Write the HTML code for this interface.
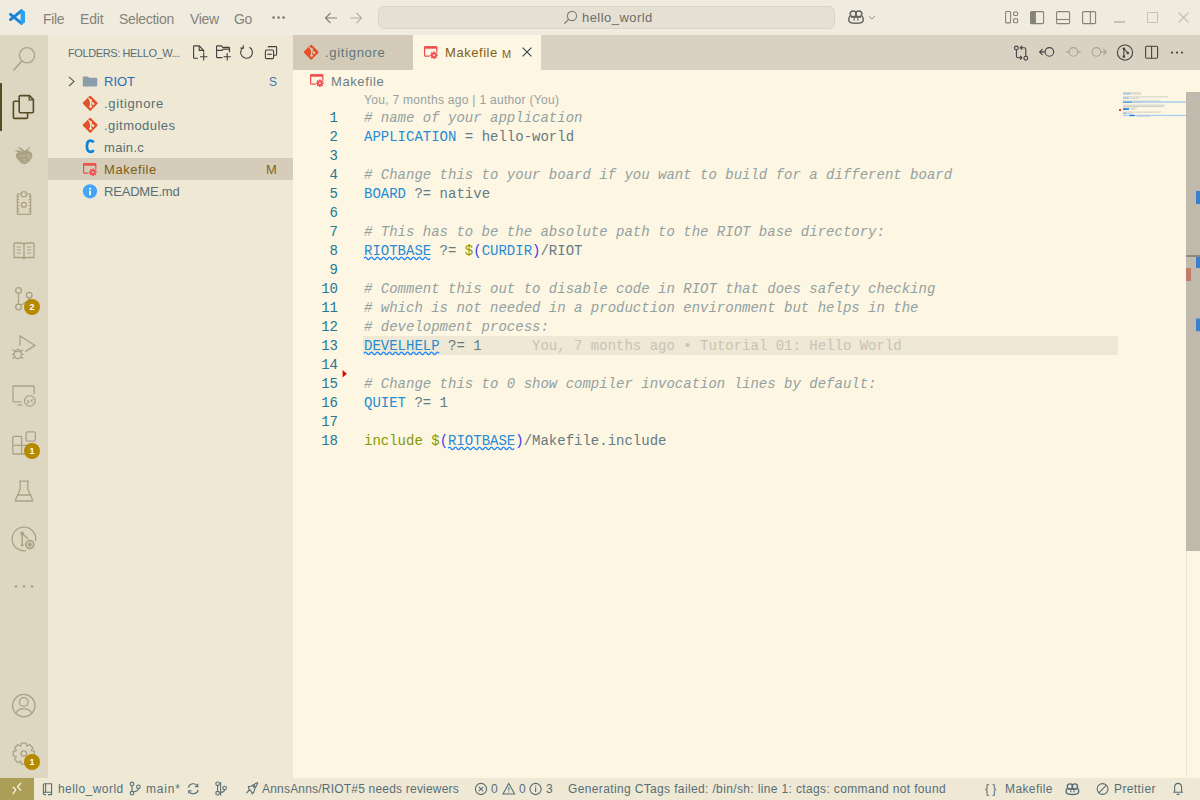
<!DOCTYPE html>
<html><head><meta charset="utf-8">
<style>
*{box-sizing:border-box;margin:0;padding:0}
html,body{width:1200px;height:800px;overflow:hidden;background:#FDF6E3;font-family:"Liberation Sans",sans-serif;font-size:13px;color:#586E75}
.abs{position:absolute}
#title{left:0;top:0;width:1200px;height:35px;background:#F0EBDF}
#act{left:0;top:35px;width:48px;height:743px;background:#DDD6C1}
#side{left:48px;top:35px;width:245px;height:743px;background:#EEE8D5}
#tabs{left:293px;top:35px;width:907px;height:35px;background:#D9D2C2}
#status{left:0;top:778px;width:1200px;height:22px;background:#EEE8D5}
.t{position:absolute;white-space:pre;line-height:1}
.menu{color:#85827a;font-size:14px;top:11.5px}
.code{font-family:"Liberation Mono",monospace;font-size:14px;white-space:pre}
.ln{position:absolute;left:293px;width:45px;text-align:right;color:#237893;font-family:"Liberation Mono",monospace;font-size:14px;height:19px;line-height:19px;padding-top:1px}
.cl{position:absolute;left:364px;height:19px;line-height:19px;color:#657B83;padding-top:1px}
.cm{color:#93A1A1;font-style:italic}
.vr{color:#268BD2}
.kw{color:#859900}
.br{color:#3b3bf0}
svg{position:absolute;overflow:visible}
.ai{fill:none;stroke:#ACA185;stroke-width:1.3}
.badge{position:absolute;width:16px;height:16px;border-radius:8px;background:#B58900;color:#fff;font-size:9px;font-weight:bold;text-align:center;line-height:16px}
.row{position:absolute;left:48px;width:245px;height:22px}
.fn{position:absolute;left:104px;font-size:13px;color:#586E75;white-space:pre;line-height:1}
.sb{position:absolute;top:783px;font-size:12px;color:#586E75;white-space:pre;line-height:1}
.si{fill:none;stroke:#586E75;stroke-width:1.1}
.ti{fill:none;stroke:#424242;stroke-width:1.1}
</style></head><body>
<div id="title" class="abs"></div>
<div id="act" class="abs"></div>
<div id="side" class="abs"></div>
<div id="tabs" class="abs"></div>
<div id="status" class="abs"></div>
<!-- TITLE BAR -->
<svg style="left:9px;top:9px" width="16" height="16" viewBox="0 0 16 16"><path d="M1.5 10.6 L12.6 1.6 M1.5 5.4 L12.6 14.4" stroke="#1B84D4" stroke-width="2.9" stroke-linecap="round" fill="none"/><path d="M11.6 0.3 L15.2 1.9 Q16 2.3 16 3.1 V12.9 Q16 13.7 15.2 14.1 L11.6 15.7 Z" fill="#27A2EE"/></svg>
<div class="t menu" style="left:43px;letter-spacing:-0.3px">File</div>
<div class="t menu" style="left:80px;letter-spacing:-0.2px">Edit</div>
<div class="t menu" style="left:119px;letter-spacing:-0.3px">Selection</div>
<div class="t menu" style="left:190px;letter-spacing:-0.3px">View</div>
<div class="t menu" style="left:234px;letter-spacing:-0.5px">Go</div>
<svg style="left:272px;top:16px" width="14" height="3"><circle cx="1.6" cy="1.6" r="1.3" fill="#7d7a72"/><circle cx="6.6" cy="1.6" r="1.3" fill="#7d7a72"/><circle cx="11.6" cy="1.6" r="1.3" fill="#7d7a72"/></svg>
<svg style="left:324px;top:11px" width="14" height="14" viewBox="0 0 14 14"><path d="M13 7 H1.5 M6.5 2 L1.5 7 L6.5 12" fill="none" stroke="#85827a" stroke-width="1.2"/></svg>
<svg style="left:349px;top:11px" width="14" height="14" viewBox="0 0 14 14"><path d="M1 7 H12.5 M7.5 2 L12.5 7 L7.5 12" fill="none" stroke="#B3AFA6" stroke-width="1.2"/></svg>
<div class="abs" style="left:378px;top:6px;width:457px;height:23px;border-radius:6px;background:#E5E0D4;border:1px solid #D9D4C8"></div>
<svg style="left:563px;top:10px" width="15" height="15" viewBox="0 0 15 15"><circle cx="9" cy="6" r="4.6" fill="none" stroke="#85827a" stroke-width="1.2"/><path d="M5.7 9.3 L1.3 13.7" stroke="#85827a" stroke-width="1.3"/></svg>
<div class="t" style="left:582px;top:11px;font-size:13px;color:#6f6c66;letter-spacing:0.45px">hello_world</div>
<svg style="left:848px;top:10px" width="16" height="14" viewBox="0 0 16 14"><g fill="none" stroke="#666460" stroke-width="1.5"><ellipse cx="5.2" cy="3.9" rx="3" ry="2.9"/><ellipse cx="10.8" cy="3.9" rx="3" ry="2.9"/><path d="M2.3 6.2 C1.3 6.6 0.9 7.4 0.9 8.6 V10.4 C0.9 12.6 4.6 13.2 8 13.2 C11.4 13.2 15.1 12.6 15.1 10.4 V8.6 C15.1 7.4 14.7 6.6 13.7 6.2"/><path d="M3.4 7.3 H12.6" stroke-width="1.2"/></g><path d="M6.2 8.6 V10.6 M9.8 8.6 V10.6" stroke="#666460" stroke-width="1.4"/></svg>
<svg style="left:868px;top:15px" width="8" height="5" viewBox="0 0 8 5"><path d="M0.8 1 L3.9 4 L7 1" fill="none" stroke="#8b8880" stroke-width="0.9"/></svg>
<svg style="left:1004px;top:10px" width="16" height="14" viewBox="0 0 16 14"><rect x="1.6" y="1.5" width="5" height="11.4" rx="1" fill="none" stroke="#85827a" stroke-width="1.1"/><rect x="9.6" y="2" width="4" height="3.5" rx="0.9" fill="none" stroke="#85827a" stroke-width="1.1"/><rect x="9.6" y="8.8" width="4" height="4" rx="0.9" fill="none" stroke="#85827a" stroke-width="1.1"/></svg>
<svg style="left:1029px;top:10px" width="16" height="15" viewBox="0 0 16 15"><rect x="1.6" y="1.6" width="13" height="12" rx="1.2" fill="none" stroke="#85827a" stroke-width="1.1"/><rect x="1.6" y="1.6" width="5.3" height="12" fill="#85827a"/></svg>
<svg style="left:1055px;top:10px" width="16" height="15" viewBox="0 0 16 15"><rect x="1.6" y="1.6" width="13" height="12" rx="1.2" fill="none" stroke="#85827a" stroke-width="1.1"/><path d="M1.6 9.5 H14.6" stroke="#85827a" stroke-width="1.1"/></svg>
<svg style="left:1081px;top:10px" width="16" height="15" viewBox="0 0 16 15"><rect x="1.6" y="1.6" width="13" height="12" rx="1.2" fill="none" stroke="#85827a" stroke-width="1.1"/><path d="M9.4 1.6 V13.6" stroke="#85827a" stroke-width="1.1"/></svg>
<div class="abs" style="left:1114px;top:21px;width:11px;height:1.6px;background:#C6C2B9"></div>
<div class="abs" style="left:1146.5px;top:12px;width:11px;height:11px;border:1.3px solid #C6C2B9"></div>
<svg style="left:1178px;top:12px" width="11" height="11" viewBox="0 0 11 11"><path d="M0.5 0.5 L10.5 10.5 M10.5 0.5 L0.5 10.5" stroke="#C6C2B9" stroke-width="1.3"/></svg>
<!-- ACTIVITY BAR -->
<div class="abs" style="left:0;top:83px;width:2px;height:48px;background:#584C27"></div>
<svg style="left:0;top:0" width="48" height="800">
<g class="ai">
<circle cx="27" cy="55.3" r="7.6"/><path d="M21.6 61.2 L13.6 70.2" stroke-width="1.5"/>
</g>
<g fill="none" stroke="#584C27" stroke-width="1.6">
<path d="M19.3 101.2 H14.6 Q13.4 101.2 13.4 102.4 V117.2 Q13.4 118.4 14.6 118.4 H26.4 Q27.6 118.4 27.6 117.2 V112.8"/>
<path d="M20.4 95.6 H29.4 L33.4 99.6 V111.6 Q33.4 112.8 32.2 112.8 H20.4 Q19.2 112.8 19.2 111.6 V96.8 Q19.2 95.6 20.4 95.6 Z"/>
<path d="M29.2 95.8 V99.8 H33.2" stroke-width="1.3"/>
</g>
<g fill="#ACA185">
<path d="M16 154.2 C16.6 152.3 19.2 151.6 22.2 152 C25.2 150.6 29.2 150.4 31.2 152.4 C33.2 154.6 32.4 157.6 30.2 160.2 C28.2 162.6 25.6 164.6 23.6 164.1 C21 163.5 16.6 158.8 16 156.4 Z"/>
<path d="M13.8 150.6 Q19 149.2 23.4 152.4 L21.6 153.8 Q18 151.8 13.8 150.6 Z"/>
<path d="M17.4 147.2 Q22.8 147.4 24.6 152 L22.2 152.6 Q21.4 149.4 17.4 147.2 Z"/>
<path d="M29.8 146 Q29.8 151 24.2 152.8 L23 151 Q28 149.8 29.8 146 Z"/>
</g>
<g fill="none" stroke="#CFC7B0" stroke-width="0.7" opacity="0.9">
<path d="M19 156.5 Q21 155.6 22.6 156.2 Q24 155 25.4 155.8"/>
<path d="M27.4 153.6 Q28.6 155.6 27.6 158 M29.6 154.4 Q30.6 156.4 29.4 158.6"/>
<path d="M22.6 159.6 Q24.4 158.6 26 159.6 M23.4 161.8 Q25 161 26.4 161.8"/>
</g>
<g class="ai">
<path d="M21.2 193.8 H18.4 Q17.4 193.8 17.4 194.8 V213.4 Q17.4 214.4 18.4 214.4 H29.6 Q30.6 214.4 30.6 213.4 V194.8 Q30.6 193.8 29.6 193.8 H26.6"/>
<circle cx="23.9" cy="194.2" r="2.6"/><circle cx="23.9" cy="204.8" r="2.5"/>
<path d="M17.4 196.4 H19.2 M17.4 199.4 H19.2 M17.4 202.4 H19.2 M17.4 205.6 H19.2 M17.4 208.6 H19.2 M17.4 211.6 H19.2 M30.6 196.4 H28.8 M30.6 199.4 H28.8 M30.6 202.4 H28.8 M30.6 205.6 H28.8 M30.6 208.6 H28.8 M30.6 211.6 H28.8"/>
</g>
<g class="ai" stroke-width="1.4">
<path d="M14 243 H21.5 Q24 243 24 245 V259 M34 243 H26.5 Q24 243 24 245 M14 243 V257.5 H22 Q24 257.5 24 259.5 Q24 257.5 26 257.5 H34 V243"/>
<path d="M16.8 247 H21 M16.8 250 H21 M16.8 253 H21 M27 247 H31.2 M27 250 H31.2 M27 253 H31.2" stroke-width="1.2"/>
</g>
<g class="ai" stroke-width="1.3">
<circle cx="18.5" cy="290.5" r="2.8"/><circle cx="29.2" cy="295.2" r="2.8"/><circle cx="18.5" cy="307" r="2.8"/>
<path d="M18.5 293.3 V304.2 M29.2 298 C29.2 302 25 303 21 305"/>
</g>
<g class="ai" stroke-width="1.4">
<path d="M20 345.8 V335.9 L35 345.4 L25.4 351.6"/>
<ellipse cx="17.8" cy="354.1" rx="3.6" ry="4.6"/>
<path d="M14.4 351.7 H21.2 M12 354.3 H14.2 M21.4 354.3 H23.6 M12.4 349.6 L14.6 351.2 M23.2 349.6 L21 351.2 M12.4 358.8 L14.6 356.8 M23.2 358.8 L21 356.8" stroke-width="1.2"/>
</g>
<g class="ai" stroke-width="1.3">
<path d="M21.6 401.8 H13.6 Q13 401.8 13 401.2 V386.6 Q13 386 13.6 386 H33.6 Q34.2 386 34.2 386.6 V394.2"/>
<path d="M17.3 405 H22.5"/>
<circle cx="29.8" cy="400.9" r="5.3"/>
<path d="M27.1 399.9 L28.8 401.7 L27.1 403.5 M32.7 399.2 L31 400.8 L32.7 402.4" stroke-width="1.1"/>
</g>
<g class="ai" stroke-width="1.3">
<path d="M12.8 445.4 H30 M21.6 454 H13.8 Q12.8 454 12.8 453 V437.4 Q12.8 436.4 13.8 436.4 H20.6 Q21.6 436.4 21.6 437.4 V454 H30 V445.4"/>
<rect x="26.1" y="431.8" width="9.3" height="9.3" rx="1.3"/>
</g>
<g class="ai" stroke-width="1.4">
<path d="M19 481.2 H29 M20.2 481.2 V489 L15.4 500.2 Q15.2 501 16 501 H32.2 Q33 501 32.8 500.2 L27.8 489 V481.2 M17.6 495 H30.4"/>
</g>
<g class="ai" stroke-width="1.3">
<path d="M35.6 541 A11.8 11.8 0 1 0 26.05 550.6"/>
<path d="M22.2 533.6 V545 M22.4 533.8 L28 538.8" stroke-width="1.5"/>
<circle cx="29.8" cy="544.6" r="3.9" stroke-width="1.8"/>
</g>
<g fill="#ACA185"><circle cx="22.2" cy="533.5" r="1.9"/><circle cx="22.2" cy="545" r="1.4"/><circle cx="29.8" cy="544.6" r="2.1"/></g>
<g fill="#ACA185"><circle cx="16" cy="586.5" r="1.3"/><circle cx="24" cy="586.5" r="1.3"/><circle cx="32" cy="586.5" r="1.3"/></g>
<g class="ai" stroke-width="1.4">
<circle cx="23.8" cy="705.6" r="11.2"/>
<circle cx="23.8" cy="702" r="4.3"/>
<path d="M15.6 713.6 C17.4 709.8 20.4 708.6 23.8 708.6 C27.2 708.6 30.2 709.8 32 713.6"/>
</g>
<g class="ai" stroke-width="1.3">
<path d="M20.76 746.20 L21.44 743.06 L26.16 743.06 L26.84 746.20 L26.88 746.22 L29.59 744.48 L32.92 747.81 L31.18 750.52 L31.20 750.56 L34.34 751.24 L34.34 755.96 L31.20 756.64 L31.18 756.68 L32.92 759.39 L29.59 762.72 L26.88 760.98 L26.84 761.00 L26.16 764.14 L21.44 764.14 L20.76 761.00 L20.72 760.98 L18.01 762.72 L14.68 759.39 L16.42 756.68 L16.40 756.64 L13.26 755.96 L13.26 751.24 L16.40 750.56 L16.42 750.52 L14.68 747.81 L18.01 744.48 L20.72 746.22 Z" stroke-linejoin="round"/>
<circle cx="23.8" cy="753.6" r="2.8"/>
</g>
</svg>
<div class="badge" style="left:24px;top:299px">2</div>
<div class="badge" style="left:24px;top:443px">1</div>
<div class="badge" style="left:24px;top:754px">1</div>
<!-- SIDEBAR -->
<div class="t" style="left:68px;top:48px;font-size:11px;color:#586E75;letter-spacing:-0.4px">FOLDERS: HELLO_W...</div>
<svg style="left:188px;top:40px" width="94" height="26" viewBox="188 40 94 26">
<g fill="none" stroke="#3f3f3f" stroke-width="1.1">
<path d="M198 58.2 H194.1 Q193.6 58.2 193.6 57.7 V46.4 Q193.6 45.9 194.1 45.9 H199.2 L203.6 50.4 V52.5"/>
<path d="M199.2 45.9 V50.4 H203.6"/>
<path d="M203.7 53.1 V60.5 M200 56.8 H207.4"/>
<path d="M222.4 57.6 H217.1 Q216.6 57.6 216.6 57.1 V46.4 Q216.6 45.9 217.1 45.9 H221.3 L222.8 47.4 H229 Q229.5 47.4 229.5 47.9 V52.3"/>
<path d="M216.6 50.4 H222 L223.3 49.1 H229.5"/>
<path d="M227.2 53.1 V60.5 M223.5 56.8 H230.9"/>
<path d="M243.1 47.6 A5.9 5.9 0 1 0 249.5 47.3"/>
<path d="M243.3 45.2 V48.1 H240.4" />
<rect x="265.4" y="50" width="8.2" height="8.6" rx="1.2"/>
<path d="M268.3 47.6 V47.2 Q268.3 46.6 268.9 46.6 H276 Q276.6 46.6 276.6 47.2 V54.6 Q276.6 55.2 276 55.2 H273.6"/>
<path d="M267.2 54.3 H271.8"/>
</g>
</svg>
<div class="row" style="top:158px;background:#D5CDB9"></div>
<svg style="left:68px;top:76px" width="8" height="11" viewBox="0 0 8 11"><path d="M1 0.8 L6 5.4 L1 10" fill="none" stroke="#4f5a5a" stroke-width="1.1"/></svg>
<svg style="left:82px;top:76px" width="16" height="11" viewBox="0 0 16 11"><path d="M0.8 1.4 Q0.8 0.4 1.8 0.4 H5.8 L7.2 1.8 H14.2 Q15.2 1.8 15.2 2.8 V9.4 Q15.2 10.4 14.2 10.4 H1.8 Q0.8 10.4 0.8 9.4 Z" fill="#8B9DAB"/></svg>
<div class="fn" style="top:75px;color:#2F6DB5">RIOT</div>
<div class="t" style="left:269px;top:76px;font-size:12px;color:#3B78B6">S</div>
<svg style="left:82px;top:95px" width="17" height="17" viewBox="0 0 17 17"><g id="gi"><path d="M8.2 1.6 L14.8 8.2 L8.2 14.8 L1.6 8.2 Z" fill="#E5512A" stroke="#E5512A" stroke-width="1.8" stroke-linejoin="round"/><path d="M6.3 2.9 L8.6 5.2 V11.6 M8.6 6.2 L11 8.6" stroke="#EEE8D5" stroke-width="1.2" fill="none"/><circle cx="8.6" cy="5.2" r="1.2" fill="#EEE8D5"/><circle cx="8.6" cy="11.6" r="1.3" fill="#EEE8D5"/><circle cx="11.1" cy="8.7" r="1.3" fill="#EEE8D5"/></g></svg>
<div class="fn" style="top:97px;letter-spacing:0.65px">.gitignore</div>
<svg style="left:82px;top:117px" width="17" height="17" viewBox="0 0 17 17"><path d="M8.2 1.6 L14.8 8.2 L8.2 14.8 L1.6 8.2 Z" fill="#E5512A" stroke="#E5512A" stroke-width="1.8" stroke-linejoin="round"/><path d="M6.3 2.9 L8.6 5.2 V11.6 M8.6 6.2 L11 8.6" stroke="#EEE8D5" stroke-width="1.2" fill="none"/><circle cx="8.6" cy="5.2" r="1.2" fill="#EEE8D5"/><circle cx="8.6" cy="11.6" r="1.3" fill="#EEE8D5"/><circle cx="11.1" cy="8.7" r="1.3" fill="#EEE8D5"/></svg>
<div class="fn" style="top:119px;letter-spacing:0.45px">.gitmodules</div>
<svg style="left:85px;top:139px" width="10" height="15" viewBox="0 0 10 15"><path d="M8.6 3.4 C8 2.2 6.8 1.6 5.6 1.6 C3.2 1.6 1.9 3.8 1.9 7.3 C1.9 10.8 3.2 12.9 5.6 12.9 C6.8 12.9 8 12.3 8.6 11.1" fill="none" stroke="#0B84D6" stroke-width="2.7"/></svg>
<div class="fn" style="top:141px;letter-spacing:0.3px">main.c</div>
<svg style="left:82px;top:162px" width="16" height="16" viewBox="0 0 16 16"><g id="mk"><rect x="1.6" y="1.9" width="12.2" height="9.2" rx="0.9" fill="none" stroke="#EE4E4E" stroke-width="1.2"/><rect x="1.2" y="1.3" width="13" height="2.4" fill="#EE4E4E"/><circle cx="10.9" cy="10.2" r="4.3" fill="#D5CDB9"/><path d="M10.9 6.4 V14 M7.1 10.2 H14.7 M8.2 7.5 L13.6 12.9 M13.6 7.5 L8.2 12.9" stroke="#EE4E4E" stroke-width="1.6"/><circle cx="10.9" cy="10.2" r="2.6" fill="#EE4E4E"/><circle cx="10.9" cy="10.2" r="1" fill="#D5CDB9"/></g></svg>
<div class="fn" style="top:163px;color:#815F14;letter-spacing:0.55px">Makefile</div>
<div class="t" style="left:266px;top:163px;font-size:13px;color:#86641A">M</div>
<svg style="left:82px;top:183px" width="16" height="16" viewBox="0 0 16 16"><circle cx="8" cy="8.3" r="7.1" fill="#42A5F5"/><rect x="7" y="4.8" width="2" height="1.8" fill="#fff"/><rect x="7" y="7.7" width="2" height="4.4" fill="#fff"/></svg>
<div class="fn" style="top:185px;letter-spacing:-0.2px">README.md</div>
<!-- TABS -->
<div class="abs" style="left:293px;top:35px;width:120px;height:35px;background:#D3CBB7"></div>
<svg style="left:303px;top:44px" width="17" height="17" viewBox="0 0 17 17"><path d="M8.2 1.6 L14.8 8.2 L8.2 14.8 L1.6 8.2 Z" fill="#E5512A" stroke="#E5512A" stroke-width="1.8" stroke-linejoin="round"/><path d="M6.3 2.9 L8.6 5.2 V11.6 M8.6 6.2 L11 8.6" stroke="#D3CBB7" stroke-width="1.2" fill="none"/><circle cx="8.6" cy="5.2" r="1.2" fill="#D3CBB7"/><circle cx="8.6" cy="11.6" r="1.3" fill="#D3CBB7"/><circle cx="11.1" cy="8.7" r="1.3" fill="#D3CBB7"/></svg>
<div class="t" style="left:325px;top:46px;font-size:13px;color:#5F767C;letter-spacing:0.7px">.gitignore</div>
<div class="abs" style="left:413px;top:35px;width:128px;height:35px;background:#FDF6E3"></div>
<svg style="left:423px;top:45px" width="16" height="16" viewBox="0 0 16 16"><rect x="1.6" y="1.9" width="12.2" height="9.2" rx="0.9" fill="none" stroke="#EE4E4E" stroke-width="1.2"/><rect x="1.2" y="1.3" width="13" height="2.4" fill="#EE4E4E"/><circle cx="10.9" cy="10.2" r="4.3" fill="#FDF6E3"/><path d="M10.9 6.4 V14 M7.1 10.2 H14.7 M8.2 7.5 L13.6 12.9 M13.6 7.5 L8.2 12.9" stroke="#EE4E4E" stroke-width="1.6"/><circle cx="10.9" cy="10.2" r="2.6" fill="#EE4E4E"/><circle cx="10.9" cy="10.2" r="1" fill="#FDF6E3"/></svg>
<div class="t" style="left:445px;top:46px;font-size:13px;color:#815F14;letter-spacing:0.55px">Makefile</div>
<div class="t" style="left:502px;top:48.5px;font-size:11px;color:#86641A;letter-spacing:0.3px">M</div>
<svg style="left:522px;top:47px" width="10" height="10" viewBox="0 0 10 10"><path d="M0.6 0.6 L9.4 9.4 M9.4 0.6 L0.6 9.4" stroke="#3d4a50" stroke-width="1.2"/></svg>
<svg style="left:1000px;top:35px" width="200" height="35" viewBox="1000 35 200 35">
<g fill="none" stroke="#424242" stroke-width="1.1">
<circle cx="1016.4" cy="48" r="1.9"/><circle cx="1025.8" cy="58.2" r="1.9"/>
<path d="M1016.4 49.9 V56.2 Q1016.4 57.8 1018 57.8 H1021.8 M1020 55.9 L1021.9 57.8 L1020 59.7"/>
<path d="M1025.8 56.3 V49.4 Q1025.8 47.8 1024.2 47.8 H1020.4 M1022.2 45.9 L1020.3 47.8 L1022.2 49.7"/>
<circle cx="1049.4" cy="51.9" r="4.3"/><path d="M1045.1 51.9 H1039.6 M1042.6 48.9 L1039.6 51.9 L1042.6 54.9"/>
</g>
<g fill="none" stroke="#A8A293" stroke-width="1.1">
<circle cx="1073.4" cy="51.9" r="4.3"/><path d="M1069.1 51.9 H1066.2 M1077.7 51.9 H1080.6"/>
<circle cx="1096.4" cy="51.9" r="4.3"/><path d="M1100.7 51.9 H1106.4 M1103.4 48.9 L1106.4 51.9 L1103.4 54.9"/>
</g>
<g fill="none" stroke="#424242" stroke-width="1.1">
<circle cx="1125" cy="52.6" r="7.6"/><path d="M1123.9 48.7 V56.6 M1123.9 48.7 L1127.8 53"/>
<rect x="1145.6" y="46.3" width="12" height="12" rx="1.2"/><path d="M1151.6 46.3 V58.3"/>
</g>
<g fill="#424242"><circle cx="1123.9" cy="48.7" r="1.3"/><circle cx="1127.8" cy="53" r="1.3"/><circle cx="1123.9" cy="56.6" r="1.3"/>
<circle cx="1172" cy="52.6" r="1.1"/><circle cx="1177" cy="52.6" r="1.1"/><circle cx="1182" cy="52.6" r="1.1"/></g>
</svg>
<!-- BREADCRUMB -->
<svg style="left:309px;top:73px" width="16" height="16" viewBox="0 0 16 16"><rect x="1.6" y="1.9" width="12.2" height="9.2" rx="0.9" fill="none" stroke="#EE4E4E" stroke-width="1.2"/><rect x="1.2" y="1.3" width="13" height="2.4" fill="#EE4E4E"/><circle cx="10.9" cy="10.2" r="4.3" fill="#FDF6E3"/><path d="M10.9 6.4 V14 M7.1 10.2 H14.7 M8.2 7.5 L13.6 12.9 M13.6 7.5 L8.2 12.9" stroke="#EE4E4E" stroke-width="1.6"/><circle cx="10.9" cy="10.2" r="2.6" fill="#EE4E4E"/><circle cx="10.9" cy="10.2" r="1" fill="#FDF6E3"/></svg>
<div class="t" style="left:331px;top:75px;font-size:13px;color:#6C7F84;letter-spacing:0.6px">Makefile</div>
<div class="t" style="left:364px;top:94px;font-size:12px;color:#98A09F;letter-spacing:0.3px">You, 7 months ago | 1 author (You)</div>
<!-- line highlight -->
<div class="abs" style="left:363px;top:336px;width:755px;height:19px;background:#EEE8D5"></div>
<!-- CODE -->
<div class="ln" style="top:108px">1</div>
<div class="ln" style="top:127px">2</div>
<div class="ln" style="top:146px">3</div>
<div class="ln" style="top:165px">4</div>
<div class="ln" style="top:184px">5</div>
<div class="ln" style="top:203px">6</div>
<div class="ln" style="top:222px">7</div>
<div class="ln" style="top:241px">8</div>
<div class="ln" style="top:260px">9</div>
<div class="ln" style="top:279px">10</div>
<div class="ln" style="top:298px">11</div>
<div class="ln" style="top:317px">12</div>
<div class="ln" style="top:336px">13</div>
<div class="ln" style="top:355px">14</div>
<div class="ln" style="top:374px">15</div>
<div class="ln" style="top:393px">16</div>
<div class="ln" style="top:412px">17</div>
<div class="ln" style="top:431px">18</div>
<div class="cl code" style="top:108px"><span class="cm"># name of your application</span></div>
<div class="cl code" style="top:127px"><span class="vr">APPLICATION</span> = hello-world</div>
<div class="cl code" style="top:165px"><span class="cm"># Change this to your board if you want to build for a different board</span></div>
<div class="cl code" style="top:184px"><span class="vr">BOARD</span> ?= native</div>
<div class="cl code" style="top:222px"><span class="cm"># This has to be the absolute path to the RIOT base directory:</span></div>
<div class="cl code" style="top:241px"><span class="vr">RIOTBASE</span> ?= <span class="kw">$</span><span class="br">(</span><span class="vr">CURDIR</span><span class="br">)</span>/RIOT</div>
<div class="cl code" style="top:279px"><span class="cm"># Comment this out to disable code in RIOT that does safety checking</span></div>
<div class="cl code" style="top:298px"><span class="cm"># which is not needed in a production environment but helps in the</span></div>
<div class="cl code" style="top:317px"><span class="cm"># development process:</span></div>
<div class="cl code" style="top:336px"><span class="vr">DEVELHELP</span> ?= 1      <span style="color:#C9C3B3">You, 7 months ago • Tutorial 01: Hello World</span></div>
<div class="cl code" style="top:374px"><span class="cm"># Change this to 0 show compiler invocation lines by default:</span></div>
<div class="cl code" style="top:393px"><span class="vr">QUIET</span> ?= 1</div>
<div class="cl code" style="top:431px"><span class="kw">include</span> <span class="kw">$</span><span class="br">(</span><span class="vr">RIOTBASE</span><span class="br">)</span>/Makefile.include</div>
<svg style="left:0;top:0" width="1200" height="800">
<g fill="none" stroke="#1A85FF" stroke-width="1.2"><path d="M364 258.4 q1.5 -2.6 3 0 t3 0 t3 0 t3 0 t3 0 t3 0 t3 0 t3 0 t3 0 t3 0 t3 0 t3 0 t3 0 t3 0 t3 0 t3 0 t3 0 t3 0 t3 0 t3 0 t3 0 t3 0"/><path d="M364 353.4 q1.5 -2.6 3 0 t3 0 t3 0 t3 0 t3 0 t3 0 t3 0 t3 0 t3 0 t3 0 t3 0 t3 0 t3 0 t3 0 t3 0 t3 0 t3 0 t3 0 t3 0 t3 0 t3 0 t3 0 t3 0 t3 0 t3 0"/><path d="M448 448.4 q1.5 -2.6 3 0 t3 0 t3 0 t3 0 t3 0 t3 0 t3 0 t3 0 t3 0 t3 0 t3 0 t3 0 t3 0 t3 0 t3 0 t3 0 t3 0 t3 0 t3 0 t3 0 t3 0 t3 0"/></g>
<path d="M342.6 370 L346.8 373.8 L342.6 377.6 Z" fill="#E00000"/>
<!-- minimap -->
<g fill="#A9B4B4" opacity="0.55" transform="translate(0 0.2)">
<rect x="1123" y="92" width="18" height="1"/>
<rect x="1132" y="93.4" width="9" height="1"/>
<rect x="1123" y="96.2" width="45" height="1"/>
<rect x="1130" y="97.6" width="9" height="1"/>
<rect x="1123" y="100.3" width="38" height="1"/>
<rect x="1132" y="101.7" width="10" height="1"/>
<rect x="1123" y="104.5" width="42" height="1"/>
<rect x="1123" y="105.9" width="41" height="1"/>
<rect x="1123" y="107.3" width="14" height="1"/>
<rect x="1131" y="108.6" width="4" height="1"/>
<rect x="1123" y="111.4" width="38" height="1"/>
<rect x="1128" y="112.8" width="4" height="1"/>
<rect x="1137" y="115.5" width="13" height="1"/>
</g>
<g fill="#4D9BD6" opacity="0.75">
<rect x="1123" y="93.4" width="8" height="1"/>
<rect x="1123" y="97.6" width="6" height="1"/>
<rect x="1123" y="112.8" width="4" height="1"/>
</g>
<rect x="1123" y="101.3" width="63" height="1.5" fill="#A9CDF0"/>
<rect x="1123" y="101.7" width="9" height="1" fill="#3A8AD8"/>
<rect x="1123" y="108.3" width="6" height="1.6" fill="#1A75E8"/>
<rect x="1123" y="114.8" width="63" height="1.3" fill="#A9CDF0"/>
<rect x="1129.5" y="114.8" width="5" height="1.3" fill="#1A75E8"/>
<rect x="1119" y="109" width="2" height="2" fill="#E0463A"/>
<!-- scrollbar -->
<rect x="1186" y="92" width="14" height="459" fill="#C0BAAD"/>
<rect x="1186" y="551" width="1" height="227" fill="#ECE5D2"/>
<rect x="1186" y="255" width="14" height="2" fill="#8C8880"/>
<rect x="1196" y="191" width="4" height="13" fill="#3D7FCF"/>
<rect x="1196" y="257" width="4" height="11" fill="#3D7FCF"/>
<rect x="1196" y="318.6" width="4" height="12.6" fill="#3D7FCF"/>
<rect x="1186" y="268" width="5" height="13" fill="#C27B6C"/>
</svg>
<!-- STATUS BAR -->
<div class="abs" style="left:0;top:778px;width:34px;height:22px;background:#AC9D57"></div>
<svg style="left:0;top:778px" width="1200" height="22" viewBox="0 778 1200 22">
<path d="M12.8 787 L15.8 789.6 L12.8 794.2 M21 783 L17.6 786.6 L21 790.6" fill="none" stroke="#fff" stroke-width="1.1"/>
<g class="si">
<path d="M43.4 794 V785 Q43.4 783.8 44.6 783.8 H51.6 V792.2 H44.6 Q43.4 792.2 43.4 793.4 Q43.4 794.6 44.6 794.6 H46 M48 794.6 H51.6 V792.2"/>
<path d="M45.6 783.8 V792.2"/>
<circle cx="132" cy="783.9" r="1.8"/><circle cx="138.4" cy="786.8" r="1.8"/><circle cx="132" cy="793.2" r="1.8"/>
<path d="M132 785.7 V791.4 M138.4 788.6 Q138.4 791 133.6 792"/>
<path d="M188.4 787.6 A5 5 0 0 1 197.6 786.2 M198.2 789.8 A5 5 0 0 1 189 791.2"/>
<path d="M195 786.6 H197.8 V783.8 M191.6 790.8 H188.8 V793.6"/>
<circle cx="217.6" cy="783.8" r="1.8"/><circle cx="217.6" cy="793.2" r="1.8"/><circle cx="224.6" cy="788" r="1.8"/>
<path d="M217.6 785.6 V791.4 M220.6 782 V795.6 M224.6 789.8 Q224.2 792 221 792.4"/>
<path d="M246.4 793 L249.6 789.8 M248.4 786.6 L251 786.2 L256.8 782.8 Q258 782.4 257.6 783.6 L254.4 789.4 L254 792 L252.2 793.8 L251.4 791.6 L248.8 789 Z"/>
<circle cx="254" cy="786.4" r="0.8"/>
<circle cx="481" cy="789" r="5.6"/><path d="M478.8 786.8 L483.2 791.2 M483.2 786.8 L478.8 791.2"/>
<path d="M508.8 783.4 L514.6 794 H503 Z M508.8 787.2 V790.4 M508.8 791.6 V792.6"/>
<circle cx="535.6" cy="789" r="5.6"/><path d="M535.6 787.6 V792 M535.6 785.4 V786.4"/>
<circle cx="1102.6" cy="789" r="5.4"/><path d="M1098.8 792.8 L1106.4 785.2"/>
<path d="M1173.2 792.2 H1183 M1174.6 792.2 V787.6 Q1174.6 783.4 1178 783.4 Q1181.6 783.4 1181.6 787.6 V792.2 M1176.6 794.4 H1179.6"/>
</g>
<g transform="translate(1065.4 783) scale(0.875)"><g fill="none" stroke="#586E75" stroke-width="1.6"><ellipse cx="5.2" cy="3.9" rx="3" ry="2.9"/><ellipse cx="10.8" cy="3.9" rx="3" ry="2.9"/><path d="M2.3 6.2 C1.3 6.6 0.9 7.4 0.9 8.6 V10.4 C0.9 12.6 4.6 13.2 8 13.2 C11.4 13.2 15.1 12.6 15.1 10.4 V8.6 C15.1 7.4 14.7 6.6 13.7 6.2"/><path d="M3.4 7.3 H12.6" stroke-width="1.3"/></g><path d="M6.2 8.6 V10.6 M9.8 8.6 V10.6" stroke="#586E75" stroke-width="1.5"/></g>
</svg>
<div class="sb" style="left:58px;letter-spacing:0.45px">hello_world</div>
<div class="sb" style="left:146px;letter-spacing:0.8px">main*</div>
<div class="sb" style="left:262px;letter-spacing:0.2px">AnnsAnns/RIOT#5 needs reviewers</div>
<div class="sb" style="left:491px">0</div>
<div class="sb" style="left:519px">0</div>
<div class="sb" style="left:546px">3</div>
<div class="sb" style="left:568px;letter-spacing:0.36px">Generating CTags failed: /bin/sh: line 1: ctags: command not found</div>
<div class="sb" style="left:985px">{ }</div>
<div class="sb" style="left:1005px;letter-spacing:0.4px">Makefile</div>
<div class="sb" style="left:1114px;letter-spacing:0.4px">Prettier</div>
</body></html>
